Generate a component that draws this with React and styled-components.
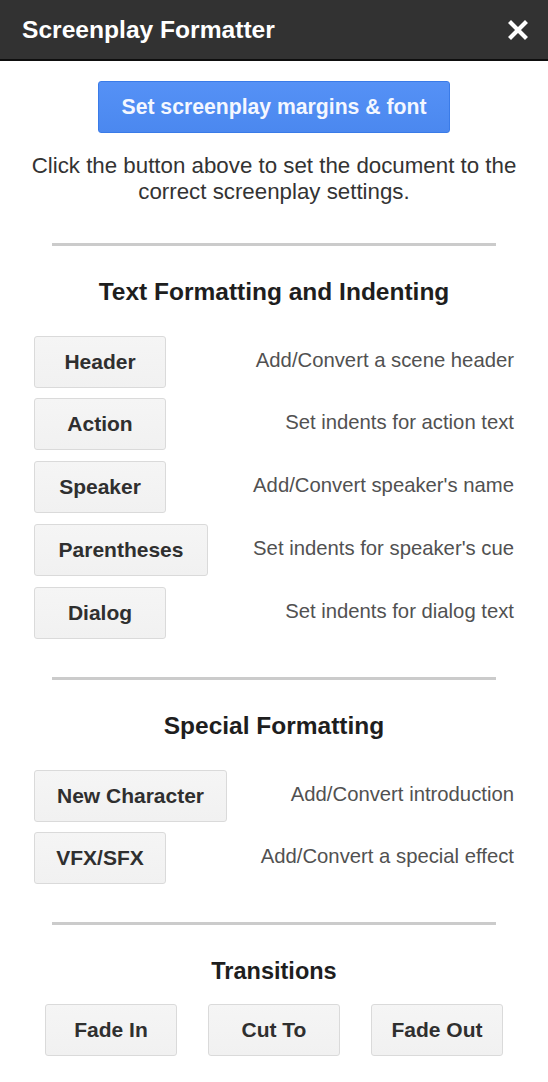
import React from 'react'
import styled, {createGlobalStyle} from 'styled-components'

const textRows = [
  {label: 'Header', hint: 'Add/Convert a scene header'},
  {label: 'Action', hint: 'Set indents for action text'},
  {label: 'Speaker', hint: "Add/Convert speaker's name"},
  {label: 'Parentheses', hint: "Set indents for speaker's cue", width: 174},
  {label: 'Dialog', hint: 'Set indents for dialog text'},
]

const specialRows = [
  {label: 'New Character', hint: 'Add/Convert introduction', width: 193},
  {label: 'VFX/SFX', hint: 'Add/Convert a special effect'},
]

const transitions = ['Fade In', 'Cut To', 'Fade Out']

export default function App() {
  return (
    <>
      <GlobalStyle />
      <Sidebar>
        <TopBar>
          <Title>Screenplay Formatter</Title>
          <Close aria-label="Close">
            <svg width="20" height="20" viewBox="0 0 20 20">
              <path d="M3 3 L17 17 M17 3 L3 17" stroke="#fff" strokeWidth="4.2" strokeLinecap="square" />
            </svg>
          </Close>
        </TopBar>

        <Content>
          <PrimaryButton>Set screenplay margins &amp; font</PrimaryButton>
          <Intro>
            Click the button above to set the document to the correct screenplay settings.
          </Intro>

          <Section>
            <Divider />
            <Heading>Text Formatting and Indenting</Heading>
            <RowList>
              {textRows.map(row => (
                <Row key={row.label}>
                  <ActionButton $width={row.width}>{row.label}</ActionButton>
                  <Hint>{row.hint}</Hint>
                </Row>
              ))}
            </RowList>
          </Section>

          <Section>
            <Divider />
            <Heading>Special Formatting</Heading>
            <RowList $gap={10}>
              {specialRows.map(row => (
                <Row key={row.label}>
                  <ActionButton $width={row.width}>{row.label}</ActionButton>
                  <Hint>{row.hint}</Hint>
                </Row>
              ))}
            </RowList>
          </Section>

          <Section>
            <Divider />
            <Heading $tight $size={23.5}>Transitions</Heading>
            <TransitionRow>
              {transitions.map(t => (
                <ActionButton key={t}>{t}</ActionButton>
              ))}
            </TransitionRow>
          </Section>
        </Content>
      </Sidebar>
    </>
  )
}

////// STYLED COMPONENTS //////
const GlobalStyle = createGlobalStyle`
  html, body {
    margin: 0;
    padding: 0;
    background: #fff;
  }
  body {
    font-family: "Liberation Sans", Arial, sans-serif;
  }
`
const Sidebar = styled.div`
  width: 548px;
  min-height: 1082px;
  background: #fff;
`
const TopBar = styled.header`
  display: flex;
  align-items: center;
  justify-content: space-between;
  height: 59px;
  padding: 0 20px 0 22px;
  background: #323232;
  border-bottom: 2px solid #0e0e0e;
`
const Title = styled.h1`
  margin: 0;
  font-size: 24.6px;
  font-weight: bold;
  color: #fff;
  line-height: 28px;
  padding-top: 1px;
`
const Close = styled.button`
  display: flex;
  padding: 0;
  margin-top: 1px;
  border: 0;
  background: none;
  cursor: pointer;
`
const Content = styled.main`
  display: flex;
  flex-direction: column;
  align-items: center;
  padding-top: 20px;
`
const PrimaryButton = styled.button`
  height: 52px;
  padding: 0 22px;
  min-width: 352px;
  font-family: inherit;
  font-size: 21.2px;
  font-weight: bold;
  color: #f4f7ff;
  background: linear-gradient(#5591f6, #4b88ef);
  border: 1px solid #3a7be8;
  border-radius: 3px;
`
const Intro = styled.p`
  margin: 19.5px 16px 0;
  font-size: 22.3px;
  line-height: 26px;
  color: #333;
  text-align: center;
`
const Section = styled.section`
  display: flex;
  flex-direction: column;
  align-items: stretch;
  width: 100%;
  padding-top: 38px;
`
const Divider = styled.hr`
  margin: 0 52px;
  height: 3px;
  border: 0;
  background: #cbcbcb;
`
const Heading = styled.h2`
  margin: 32px 0 ${props => props.$tight ? '19.5px' : '30px'};
  font-size: ${props => props.$size || 24.5}px;
  line-height: 28px;
  font-weight: bold;
  color: #1e1e1e;
  text-align: center;
`
const RowList = styled.div`
  display: flex;
  flex-direction: column;
  gap: ${props => props.$gap || 10.75}px;
  padding: 0 34px;
`
const Row = styled.div`
  display: flex;
  align-items: center;
  justify-content: space-between;
`
const ActionButton = styled.button`
  box-sizing: border-box;
  width: ${props => props.$width || 132}px;
  height: 52px;
  padding: 0;
  font-family: inherit;
  font-size: 21px;
  font-weight: bold;
  color: #2f2f2f;
  background: linear-gradient(#f5f5f5, #f1f1f1);
  border: 1px solid #dadada;
  border-radius: 3px;
`
const Hint = styled.span`
  font-size: 20.3px;
  color: #515151;
  margin-top: -3px;
`
const TransitionRow = styled.div`
  display: flex;
  justify-content: center;
  gap: 31px;
`
